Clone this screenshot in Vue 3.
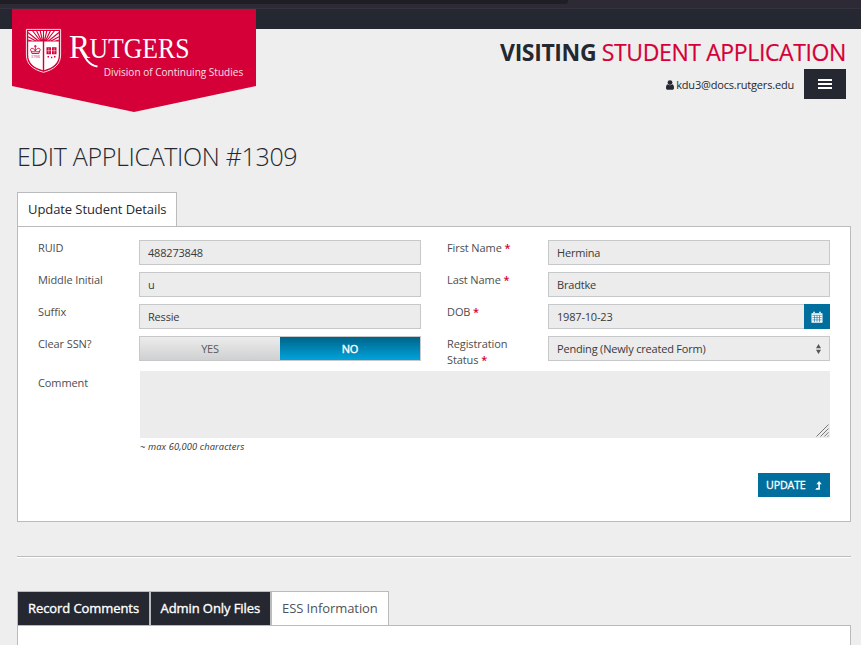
<script setup>
import { ref } from 'vue'

const leftFields = [
  { label: 'RUID', value: '488273848' },
  { label: 'Middle Initial', value: 'u' },
  { label: 'Suffix', value: 'Ressie' },
]
const rightFields = [
  { label: 'First Name', value: 'Hermina' },
  { label: 'Last Name', value: 'Bradtke' },
]
const clearSsn = ref('NO')
</script>

<template>
  <div class="page">
    <div class="chrome"><div class="chrome-tab"></div></div>
    <div class="topbar"></div>

    <header class="header">
      <svg class="logo" width="244" height="103" viewBox="12 9 244 103" role="img">
        <path d="M12 9H256V86L134 112L12 86Z" fill="#d50037" />
        <path d="M26.4 29.4H60.6V55C60.6 64.5 54 69.5 43.5 72.3C33 69.5 26.4 64.5 26.4 55Z" fill="#d50037" stroke="#fbe3ea" stroke-width="1" />
        <path d="M28.2 31H58.8V40.7H28.2Z" fill="#fff" />
        <g stroke="#d50037" stroke-width="1.15">
          <path d="M43.5 45L28 40M43.5 45L28 36.7M43.5 45L28 32.5M43.5 45L32 30M43.5 45L36.2 30M43.5 45L40 30M43.5 45L43.5 30M43.5 45L47 30M43.5 45L50.8 30M43.5 45L55 30M43.5 45L59 32.5M43.5 45L59 36.7M43.5 45L59 40" />
        </g>
        <path d="M28.2 41.5H42.8V70.2C34 67.5 28.2 63.5 28.2 55Z M44.2 41.5H58.8V55C58.8 63.5 53 67.5 44.2 70.2Z" fill="#fff" />
        <g fill="none" stroke="#d50037" stroke-width=".9">
          <path d="M32 53.5L30.5 49.5C31 47.5 34 48 35.3 51C36.6 48 39.8 47.5 40.2 49.5L38.8 53.5ZM35.3 45V51M34 46.2H36.6M31.5 51.8H39.3" />
        </g>
        <g fill="#d50037">
          <path d="M46.5 47.2H51V54.2H46.5ZM52 47.2H56.5V54.2H52Z" />
          <path d="M47.5 56H49V57.4H47.5ZM51 56.8H52.3V58.2H51ZM54 56H55.5V57.4H54Z" />
        </g>
        <path d="M46.5 50.7H56.5M48.8 48V53.5M54.2 48V53.5" stroke="#fff" stroke-width=".5" />
        <text x="31" y="58.3" class="logo-year" textLength="9" lengthAdjust="spacingAndGlyphs">1766</text>
        <text x="69" y="57.5" class="logo-r" textLength="21" lengthAdjust="spacingAndGlyphs">R</text>
        <path d="M80 48C84.5 57 88 65 97.5 66.5" fill="none" stroke="#fff" stroke-width="1.9" />
        <text x="89.5" y="57.7" class="logo-name" textLength="100" lengthAdjust="spacingAndGlyphs">UTGERS</text>
        <text x="103.7" y="75.8" class="logo-sub" textLength="139.5" lengthAdjust="spacingAndGlyphs">Division of Continuing Studies</text>
      </svg>

      <div class="header-right">
        <div class="app-title"><b>VISITING</b> <span>STUDENT APPLICATION</span></div>
        <div class="user-row">
          <svg class="user-icon" width="8" height="10" viewBox="0 0 8 10"><circle cx="4" cy="2.6" r="2.4" /><path d="M1.7 4.3C.3 4.8 0 6.4 0 8C0 9.2.7 9.8 1.7 9.8H6.3C7.3 9.8 8 9.2 8 8C8 6.4 7.7 4.8 6.3 4.3C5 5.6 3 5.6 1.7 4.3Z" /></svg>
          <span class="email">kdu3@docs.rutgers.edu</span>
          <button class="menu" aria-label="Menu"><i></i><i></i><i></i></button>
        </div>
      </div>
    </header>

    <main>
      <h1>EDIT APPLICATION #1309</h1>

      <div class="tabs"><div class="tab first"><span>Update Student Details</span></div></div>
      <section class="panel">
        <div class="columns">
          <div class="col">
            <div v-for="f in leftFields" :key="f.label" class="row">
              <label>{{ f.label }}</label>
              <div class="field">{{ f.value }}</div>
            </div>
            <div class="row">
              <label>Clear SSN?</label>
              <div class="segment">
                <button v-for="o in ['YES', 'NO']" :key="o" :class="{ on: clearSsn === o }" @click="clearSsn = o">{{ o }}</button>
              </div>
            </div>
          </div>
          <div class="col">
            <div v-for="f in rightFields" :key="f.label" class="row">
              <label>{{ f.label }} <em>*</em></label>
              <div class="field">{{ f.value }}</div>
            </div>
            <div class="row">
              <label>DOB <em>*</em></label>
              <div class="field date">
                <span>1987-10-23</span>
                <button class="calendar" aria-label="Calendar">
                  <svg width="12" height="12" viewBox="0 0 12 12">
                    <path d="M.5 2.2H2.2V.8H4V2.2H8V.8H9.8V2.2H11.5V11.7H.5Z" fill="#fff" />
                    <path d="M1.3 4.3H10.7M1.3 6.6H10.7M1.3 8.9H10.7M3.5 4.3V11M6 4.3V11M8.5 4.3V11" stroke="#006f9d" stroke-width=".6" />
                    <path d="M3.1 1.3V3M8.9 1.3V3" stroke="#006f9d" stroke-width=".4" />
                  </svg>
                </button>
              </div>
            </div>
            <div class="row">
              <label><span class="line">Registration</span><span class="line">Status <em>*</em></span></label>
              <div class="field select">
                <span>Pending (Newly created Form)</span>
                <svg width="5" height="10" viewBox="0 0 5 10"><path d="M0 4.2L2.5 0L5 4.2ZM0 5.8H5L2.5 10Z" fill="#555" /></svg>
              </div>
            </div>
          </div>
        </div>

        <div class="comment">
          <label>Comment</label>
          <div class="comment-body">
            <div class="textarea">
              <svg width="14" height="14" viewBox="0 0 14 14"><path d="M.5 12.5L12.5 .5M4.5 12.5L12.5 4.5M8.3 12.5L12.5 8.3M11.5 12.5L12.5 11.5" stroke="#777" stroke-width="1" /></svg>
            </div>
            <div class="hint">~ max 60,000 characters</div>
          </div>
        </div>

        <div class="actions">
          <button class="update">
            <span>UPDATE</span>
            <svg width="7" height="9" viewBox="0 0 7 9"><path d="M.3 8.7H4.9V3.3H6.8L4.1 0L1.4 3.3H3.3V7.1H1.5Z" fill="#fff" /></svg>
          </button>
        </div>
      </section>

      <hr />

      <div class="tabs lower">
        <div class="tab dark rc"><span>Record Comments</span></div>
        <div class="tab dark af"><span>Admin Only Files</span></div>
        <div class="tab ess"><span>ESS Information</span></div>
      </div>
      <section class="panel bottom"></section>
    </main>
  </div>
</template>

<style>
html, body { background: #eee; overflow: hidden; }
</style>

<style scoped>
* { box-sizing: border-box; }
.page { height: 645px; overflow: hidden; background: #eee; color: #252830; font-family: "Open Sans", "Noto Sans", sans-serif; font-size: 11px; }
button { font-family: inherit; border: 0; padding: 0; }
.chrome { height: 9px; background: #2d2a35; border-bottom: 1px solid #34323c; }
.chrome-tab { width: 568px; height: 4px; background: #1f1e24; border-bottom-right-radius: 3px; }
.topbar { height: 20px; background: #252830; }
.header { display: flex; justify-content: space-between; margin-top: -20px; padding: 0 15px 0 12px; height: 103px; }
.logo { display: block; flex: none; }
.logo text { fill: #fff; }
.logo-r { font: 34px "Liberation Serif", serif; }
.logo-name { font: 29px "Liberation Serif", serif; }
.logo-sub { font: 11.6px "Open Sans", sans-serif; opacity: .88; }
.logo .logo-year { font: 4.5px "Liberation Serif", serif; fill: #d50037; }
.header-right { display: flex; flex-direction: column; align-items: flex-end; padding-top: 28px; }
.app-title { height: 32px; line-height: 31px; font-size: 23px; white-space: nowrap; letter-spacing: -.38px; }
.user-row { display: flex; align-items: center; height: 30px; }
.app-title span { color: #d50037; -webkit-text-stroke: .2px #d50037; }
.user-icon { fill: #252830; margin: 1px 2px 0 0; }
.email { margin-right: 10px; line-height: 30px; padding-top: 2px; letter-spacing: -.19px; }
.menu { width: 42px; height: 30px; background: #252830; display: flex; flex-direction: column; align-items: center; justify-content: center; gap: 2px; }
.menu i { width: 14px; height: 2px; background: #fff; }
main { padding: 0 10px 0 17px; }
h1 { margin: 26px 0 0; height: 36px; line-height: 36px; font-size: 25px; font-weight: 300; white-space: nowrap; letter-spacing: -.33px; }
.tabs { display: flex; margin-top: 18px; height: 34px; }
.tab { border: 1px solid #b9bbbd; border-bottom: 0; background: #fff; padding-left: 10px; line-height: 33px; font-size: 13px; white-space: nowrap; letter-spacing: -.08px; }
.tab.first { width: 160px; }
.panel { height: 296px; background: #fff; border: 1px solid #bbb; padding: 13px 20px 0; }
.columns { display: flex; gap: 26px; height: 131px; }
.col { flex: none; width: 383px; display: flex; flex-direction: column; gap: 7px; }
.row { display: flex; height: 25px; }
label { width: 101px; flex: none; color: #4d4d4d; line-height: 16px; padding-right: 20px; letter-spacing: -.1px; }
label em { color: #d50037; font-style: normal; font-weight: 600; }
.line { display: block; height: 16px; }
.field { flex: 1; display: flex; align-items: center; border: 1px solid #c6c8c9; background: #ececec; color: #3a3a3a; padding: 0 8px; white-space: nowrap; letter-spacing: -.19px; }
.date { justify-content: space-between; padding: 0 0 0 8px; }
.calendar { width: 26px; height: 25px; margin: -1px; background: #006f9d; display: flex; align-items: center; justify-content: center; }
.select { justify-content: space-between; }
.segment { flex: 1; display: flex; border: 1px solid #c6c8c9; }
.segment button { flex: 1; font-size: 11px; letter-spacing: -.2px; color: #5a5a5a; background: linear-gradient(#ececec, #cfd0d1); }
.segment button.on { color: #fff; -webkit-text-stroke: .4px #fff; background: linear-gradient(#006489, #00a3dc); }
.comment { display: flex; height: 102px; }
.comment label { width: 102px; padding-top: 4px; }
.comment-body { flex: 1; }
.textarea { height: 67px; background: #ececec; display: flex; justify-content: flex-end; align-items: flex-end; }
.hint { font-size: 9.3px; line-height: 18px; font-style: italic; color: #333; letter-spacing: .12px; }
.actions { display: flex; justify-content: flex-end; }
.update { width: 72px; height: 24px; background: #006f9d; color: #fff; display: flex; align-items: center; justify-content: space-between; padding: 0 8px; font-size: 10.7px; letter-spacing: -.15px; -webkit-text-stroke: .3px #fff; }
hr { margin: 34px 0 33px; height: 2px; border: 0; border-top: 1px solid #b9bbbd; background: #fff; }
.tabs.lower { margin: 0; }
.tab.dark { background: #252830; color: #fff; -webkit-text-stroke: .35px #fff; }
.rc { width: 133px; }
.af { width: 121px; }
.tab.af { padding-left: 9.5px; }
.ess { width: 118px; color: #4d535c; }
.bottom { height: 60px; }
</style>
